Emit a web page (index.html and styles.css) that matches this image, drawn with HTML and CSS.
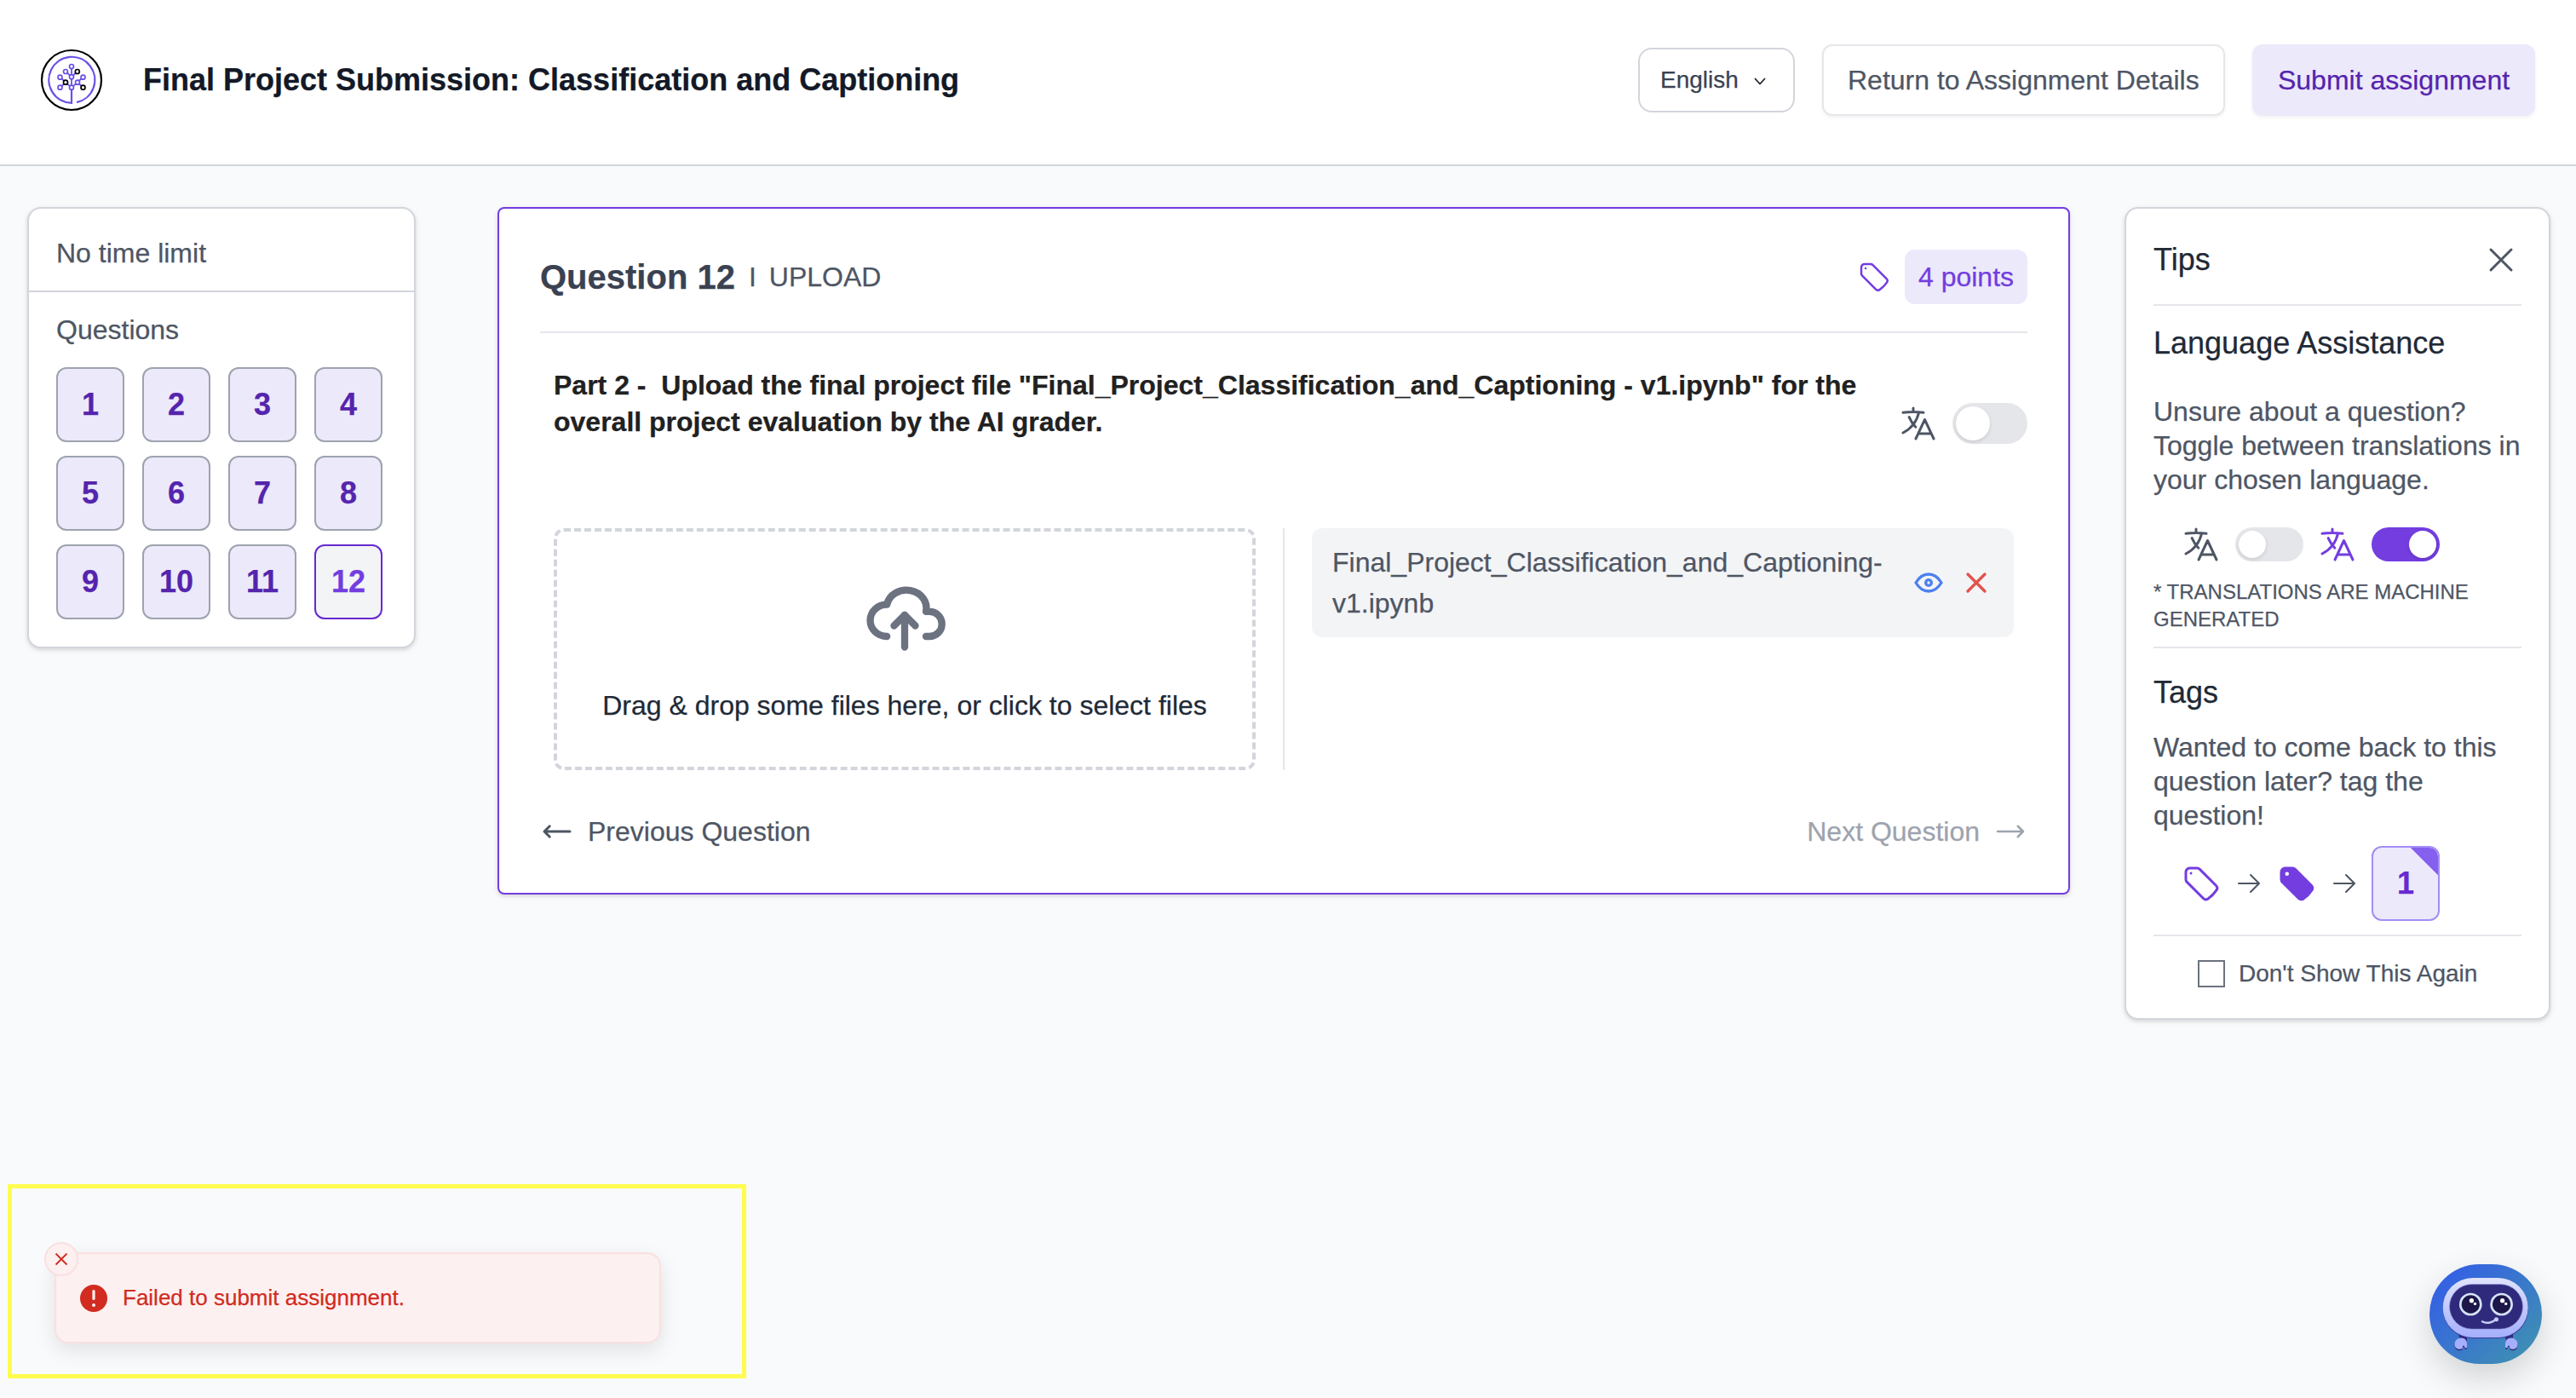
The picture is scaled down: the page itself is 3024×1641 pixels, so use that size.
FILE: index.html
```html
<!DOCTYPE html>
<html lang="en">
<head>
<meta charset="utf-8">
<title>Final Project Submission</title>
<link rel="stylesheet" href="styles.css">
</head>
<body>
<svg class="defs" width="0" height="0">
  <defs>
    <symbol id="tag" viewBox="0 0 24 24"><path d="M9.568 3H5.25A2.25 2.25 0 0 0 3 5.25v4.318c0 .597.237 1.17.659 1.591l9.581 9.581c.699.699 1.78.872 2.607.33a18.095 18.095 0 0 0 5.223-5.223c.542-.827.369-1.908-.33-2.607L11.16 3.66A2.25 2.25 0 0 0 9.568 3Z"/><path d="M6 6h.008v.008H6V6Z"/></symbol>
    <symbol id="language" viewBox="0 0 24 24"><path d="m10.5 21 5.25-11.25L21 21m-9-3h7.5M3 5.621a48.474 48.474 0 0 1 6-.371m0 0c1.12 0 2.233.038 3.334.114M9 5.25V3m3.334 2.364C11.176 10.658 7.69 15.08 3 17.502m9.334-12.138c.896.061 1.785.147 2.666.257m-4.589 8.495a18.023 18.023 0 0 1-3.827-5.802"/></symbol>
    <symbol id="arrow" viewBox="0 0 24 24"><path d="M13.5 4.5 21 12m0 0-7.5 7.5M21 12H3"/></symbol>
    <symbol id="x" viewBox="0 0 24 24"><path d="M6 18 18 6M6 6l12 12"/></symbol>
  </defs>
</svg>

<header class="topbar">
  <svg class="logo" viewBox="0 0 72 72" fill="none">
    <circle cx="36" cy="36" r="35" stroke="#000" stroke-width="2.2"/>
    <g stroke="#6a50e6" stroke-width="1.800">
      <path d="M36 47V62.8A27 27 0 1 1 42 62.2" stroke-width="2.2"/>
      <path d="M36 22.500v7M36 34.500v7.500M31 27.500l3 3M31 40.500l3.200 2.600M24.500 34.500l2.800 2.500M47.500 34.500l-3 2.500M41 40.500l-3.200 2.600M45 40.500l3 2.600M24.500 43l2.800-2.600M41 27.500l-3 3"/>
      <g stroke-width="1.700">
        <circle cx="36" cy="20" r="2.500"/><circle cx="29" cy="26" r="2.500"/><circle cx="36" cy="32.200" r="2.500"/><circle cx="22.500" cy="32.700" r="2.500"/><circle cx="49.500" cy="32.700" r="2.500"/><circle cx="43" cy="38.700" r="2.500"/><circle cx="22.500" cy="44.700" r="2.500"/><circle cx="36" cy="44.700" r="2.500"/>
        <g stroke="#000"><circle cx="42.800" cy="26" r="2.500"/><circle cx="29" cy="38.700" r="2.500"/><circle cx="49.500" cy="44.700" r="2.500"/></g>
      </g>
    </g>
  </svg>
  <h1 class="title">Final Project Submission: Classification and Captioning</h1>
  <div class="actions">
    <button class="btn btn-lang">English<svg class="chevron" viewBox="0 0 14 9" fill="none" stroke="currentColor" stroke-width="1.800"><path d="M1 1l6 6.500L13 1"/></svg></button>
    <button class="btn btn-plain">Return to Assignment Details</button>
    <button class="btn btn-submit">Submit assignment</button>
  </div>
</header>

<main class="layout">
  <nav class="card sidebar">
    <div class="limit">No time limit</div>
    <div class="questions">
      <div class="label">Questions</div>
      <div class="grid">
        <span class="num">1</span><span class="num">2</span><span class="num">3</span><span class="num">4</span>
        <span class="num">5</span><span class="num">6</span><span class="num">7</span><span class="num">8</span>
        <span class="num">9</span><span class="num">10</span><span class="num">11</span><span class="num current">12</span>
      </div>
    </div>
  </nav>

  <section class="card question">
    <div class="q-head">
      <h2>Question 12</h2><span class="bar">I</span><span class="kind">UPLOAD</span>
      <svg class="icon i40 purple q-tag"><use href="#tag"/></svg>
      <span class="points">4 points</span>
    </div>
    <div class="prompt-row">
      <p class="prompt">Part 2 -&nbsp; Upload the final project file "Final_Project_Classification_and_Captioning - v1.ipynb" for the overall project evaluation by the AI grader.</p>
      <div class="translate"><svg class="icon i48"><use href="#language"/></svg><span class="toggle big"><i></i></span></div>
    </div>
    <div class="upload">
      <div class="drop">
        <svg class="cloud" viewBox="0 0 24 24"><path d="M7 18a4.600 4.400 0 0 1 0 -9a5 4.500 0 0 1 11 2h1a3.500 3.500 0 0 1 0 7h-1"/><path d="M9 15l3 -3l3 3"/><path d="M12 12l0 9"/></svg>
        <span>Drag &amp; drop some files here, or click to select files</span>
      </div>
      <div class="files">
        <div class="file">
          <span class="name">Final_Project_Classification_and_Captioning-<br>v1.ipynb</span>
          <svg class="icon i40 thick blue" viewBox="0 0 24 24"><path d="M10 12a2 2 0 1 0 4 0a2 2 0 0 0 -4 0"/><path d="M21 12c-2.400 4 -5.400 6 -9 6c-3.600 0 -6.600 -2 -9 -6c2.400 -4 5.400 -6 9 -6c3.600 0 6.600 2 9 6"/></svg>
          <svg class="icon i40 thick red"><use href="#x"/></svg>
        </div>
      </div>
    </div>
    <div class="pager">
      <span class="prev"><svg class="icon i40 medium" viewBox="0 0 24 24"><path d="M6.750 15.750 3 12m0 0 3.750-3.750M3 12h18"/></svg>Previous Question</span>
      <span class="next">Next Question<svg class="icon i40" viewBox="0 0 24 24"><path d="M17.250 8.250 21 12m0 0-3.750 3.750M21 12H3"/></svg></span>
    </div>
  </section>

  <aside class="card tips">
    <div class="tips-head"><h3>Tips</h3><svg class="icon i48"><use href="#x"/></svg></div>
    <div class="tip">
      <h3>Language Assistance</h3>
      <p class="lang-text">Unsure about a question? Toggle between translations in your chosen language.</p>
      <div class="demo lang-demo">
        <svg class="icon i48"><use href="#language"/></svg><span class="toggle"><i></i></span>
        <svg class="icon i48 purple"><use href="#language"/></svg><span class="toggle on"><i></i></span>
      </div>
      <p class="note">* TRANSLATIONS ARE MACHINE GENERATED</p>
    </div>
    <div class="tip tags">
      <h3>Tags</h3>
      <p>Wanted to come back to this question later? tag the question!</p>
      <div class="demo">
        <svg class="icon i48 purple"><use href="#tag"/></svg>
        <svg class="icon i32"><use href="#arrow"/></svg>
        <svg class="i48 solid" viewBox="0 0 24 24"><path fill-rule="evenodd" d="M5.250 2.250a3 3 0 0 0-3 3v4.318a3 3 0 0 0 .879 2.121l9.580 9.581c.920.920 2.390 1.186 3.548.428a18.849 18.849 0 0 0 5.441-5.440c.758-1.160.492-2.629-.428-3.548l-9.580-9.581a3 3 0 0 0-2.122-.879H5.250ZM6.375 7.500a1.125 1.125 0 1 0 0-2.250 1.125 1.125 0 0 0 0 2.250Z"/></svg>
        <svg class="icon i32"><use href="#arrow"/></svg>
        <span class="num tagged">1</span>
      </div>
    </div>
    <label class="dismiss"><span class="box"></span>Don't Show This Again</label>
  </aside>
</main>

<div class="highlight"></div>
<div class="toast">
  <span class="toast-close"><svg viewBox="0 0 16 16"><path d="M1.500 1.500l13 13M14.500 1.500l-13 13"/></svg></span>
  <svg class="alert" viewBox="0 0 32 32"><circle cx="16" cy="16" r="16" fill="#d22b20"/><path d="M16 7.500v9" stroke="#fcf0f0" stroke-width="3.200" stroke-linecap="round"/><circle cx="16" cy="24" r="2" fill="#fcf0f0"/></svg>
  <span class="toast-text">Failed to submit assignment.</span>
</div>

<div class="bot">
  <svg viewBox="0 0 132 117" fill="none">
    <defs><linearGradient id="head" x1="0" y1="0" x2="0" y2="1"><stop offset="0" stop-color="#e0e3fc"/><stop offset="1" stop-color="#a5affb"/></linearGradient></defs>
    <path d="M34 82h10v8h-8zM88 82h10v8h-8z" fill="#302a7c"/>
    <path d="M29.500 94c0-5 4-7.500 8-7.500s6.500 3 6.500 7v4.500c-1 1.500-2.500 1-3-1-.5-1.500-2-1-2 .5 0 3-3 3-5.500 2.500-2.500-.5-4-3-4-6z" fill="#302a7c" transform="translate(0 1)"/>
    <path d="M29.500 94c0-5 4-7.500 8-7.500s6.500 3 6.500 7v4c-1 1.500-2.500 1-3-1-.5-1.500-2-1-2 .5 0 3-3 3-5.500 2.500-2.500-.5-4-2.500-4-5.500z" fill="#a5affb"/>
    <path d="M103.500 94c0-5-4-7.500-8-7.500s-6.500 3-6.500 7v4.500c1 1.500 2.500 1 3-1 .5-1.500 2-1 2 .5 0 3 3 3 5.500 2.500 2.500-.5 4-3 4-6z" fill="#302a7c" transform="translate(0 1)"/>
    <path d="M103.500 94c0-5-4-7.500-8-7.500s-6.500 3-6.500 7v4c1 1.500 2.500 1 3-1 .5-1.500 2-1 2 .5 0 3 3 3 5.500 2.500 2.500-.5 4-2.500 4-5.500z" fill="#a5affb"/>
    <rect x="15.700" y="17" width="100.300" height="70" rx="35" fill="#3b3a9a"/>
    <rect x="15.700" y="16" width="100" height="70" rx="35" fill="url(#head)"/>
    <rect x="23.500" y="23.600" width="86" height="52.400" rx="26.200" fill="#302a7c" stroke="#8b8fd8" stroke-width=".6"/>
    <g fill="#1c1748" stroke="#d5e2f8" stroke-width="2.700"><circle cx="48.300" cy="47" r="12"/><circle cx="84.600" cy="47" r="12"/></g>
    <g fill="#fff"><circle cx="49.400" cy="42.700" r="2.600"/><circle cx="53.500" cy="46.400" r="1.700"/><circle cx="85.600" cy="42.700" r="2.600"/><circle cx="89.700" cy="46.400" r="1.700"/></g>
    <path d="M62 67.200c5 3 12.500 1.500 16-3" stroke="#c3cdf8" stroke-width="2.400" stroke-linecap="round"/>
    <circle cx="78.500" cy="64.700" r="2.500" fill="#c3cdf8"/>
  </svg>
</div>
</body>
</html>
```
FILE: styles.css
```css
* { box-sizing: border-box; margin: 0; padding: 0; }

body {
  height: 1641px;
  position: relative;
  overflow: hidden;
  background: #f9fafc;
  color: #4e5664;
  font: 32px/48px "Liberation Sans", Arial, sans-serif;
  -webkit-text-stroke: .25px currentColor;
}

.defs { position: absolute; }

.icon { flex: none; fill: none; stroke: currentColor; stroke-width: 1.5; stroke-linecap: round; stroke-linejoin: round; }
.medium { stroke-width: 1.8; }
.thick { stroke-width: 2; }
.i32 { width: 32px; height: 32px; }
.i40 { width: 40px; height: 40px; }
.i48 { width: 48px; height: 48px; }
.purple { color: #733de0; }
.blue { color: #4d80f0; }
.red { color: #e0524b; }
.solid { fill: #733de0; }

/* Header */
.topbar {
  display: flex;
  align-items: center;
  height: 195px;
  padding: 0 48px 5px;
  background: #fff;
  border-bottom: 2px solid #d2d5db;
}
.logo { width: 72px; height: 72px; overflow: visible; }
.title { margin-left: 48px; font-size: 36px; color: #131927; white-space: nowrap; }
.actions { display: flex; align-items: center; gap: 32px; margin-left: auto; }
.btn {
  height: 84px;
  padding: 0 30px;
  border: 2px solid #e5e7eb;
  border-radius: 12px;
  background: #fff;
  color: #4e5664;
  font: inherit;
  white-space: nowrap;
  box-shadow: 0 2px 4px rgba(0, 0, 0, .06);
}
.btn-plain { width: 473px; padding: 0 32px 0 28px; }
.btn-submit { width: 332px; padding: 0; border-color: #ece9fb; background: #ece9fb; color: #5524ad; }
.btn-lang {
  display: flex;
  align-items: center;
  gap: 18px;
  width: 184px;
  height: 76px;
  padding: 0 24px;
  border-color: #d2d5db;
  border-radius: 16px;
  color: #3a4252;
  font-size: 28px;
  box-shadow: none;
}
.chevron { width: 14px; height: 9px; flex: none; color: #1f2430; margin-top: 3px; }

/* Page columns */
.layout { display: flex; align-items: flex-start; padding: 48px 30px 0 32px; }
.card {
  background: #fff;
  border: 2px solid #d2d5db;
  border-radius: 16px;
  box-shadow: 0 2px 6px rgba(0, 0, 0, .1), 0 2px 4px rgba(0, 0, 0, .06);
}

.sidebar { width: 456px; height: 518px; }
.limit { height: 98px; padding: 28px 32px 0; border-bottom: 2px solid #d2d5db; }
.questions { padding: 20px 32px 32px; }
.grid { display: grid; grid-template-columns: repeat(4, 85px); gap: 16px; margin-top: 20px; }
.num {
  display: flex;
  align-items: center;
  justify-content: center;
  width: 80px;
  height: 88px;
  border: 2px solid #9da3ae;
  border-radius: 12px;
  background: #ece9fb;
  color: #5524ad;
  font-size: 36px;
  font-weight: bold;
}
.current { border-color: #6729cf; background: #f3f4f6; color: #733de0; }

/* Question card */
.question { width: 1846px; height: 807px; margin-left: 96px; padding: 48px; border-color: #733de0; border-radius: 8px; }
.q-head { display: flex; align-items: center; height: 98px; padding-bottom: 32px; border-bottom: 2px solid #e5e7eb; }
.q-head h2 { font-size: 40px; color: #3a4252; }
.bar { margin: 0 15px 0 16px; }
.q-tag { margin-left: auto; }
.points { margin-left: 16px; width: 144px; height: 64px; border-radius: 12px; background: #ece9fb; color: #733de0; text-align: center; line-height: 64px; }
.prompt-row { display: flex; height: 229px; padding: 40px 0 0 16px; }
.prompt { flex: none; width: 1546px; line-height: 42.5px; font-weight: bold; color: #212121; }
.translate { display: flex; align-items: center; gap: 16px; height: 48px; margin: 42px 0 0 auto; }
.toggle { display: flex; width: 80px; height: 40px; padding: 4px; border-radius: 24px; background: #e5e6ea; }
.toggle i { width: 32px; height: 32px; border-radius: 50%; background: #fff; box-shadow: 0 2px 4px rgba(0, 0, 0, .12); }
.toggle.big { width: 88px; height: 48px; }
.toggle.big i { width: 40px; height: 40px; }
.toggle.on { background: #733de0; justify-content: flex-end; }

.upload { display: flex; height: 284px; padding: 0 16px; }
.drop {
  display: flex;
  flex-direction: column;
  align-items: center;
  gap: 32px;
  width: 824px;
  padding-top: 48px;
  border: 4px dashed #d2d5db;
  border-radius: 12px;
  color: #212936;
  white-space: nowrap;
}
.cloud { width: 100px; height: 100px; fill: none; stroke: #6c7280; stroke-width: 2; stroke-linecap: round; stroke-linejoin: round; }
.files { flex: 1; margin-left: 32px; padding-left: 32px; border-left: 2px solid #e5e7eb; }
.file { display: flex; align-items: center; gap: 16px; height: 128px; padding: 0 24px; border-radius: 12px; background: #f3f4f6; }
.name { flex: 1; white-space: nowrap; }

.pager { display: flex; justify-content: space-between; margin-top: 48px; }
.pager span { display: flex; align-items: center; gap: 16px; }
.pager .next { color: #9da3ae; }

/* Tips card */
.tips { width: 500px; height: 954px; margin-left: auto; padding: 0 32px; }
.tips h3 { font-size: 36px; font-weight: normal; color: #212936; }
.tips-head { display: flex; justify-content: space-between; align-items: center; height: 114px; padding: 36px 0 28px; border-bottom: 2px solid #e5e7eb; }
.tip { padding: 20px 0 16px; border-bottom: 2px solid #e5e7eb; }
.tip p { line-height: 40px; margin-top: 20px; }
.tip .lang-text { margin-top: 36px; }
.tip .note { margin-top: 16px; font-size: 24px; line-height: 32px; }
.tags { padding-top: 28px; }
.demo { display: flex; align-items: center; gap: 16px; margin-top: 16px; padding-left: 32px; }
.lang-demo { height: 48px; margin-top: 32px; }
.tagged {
  border-color: #a48df5;
  color: #6729cf;
  background: linear-gradient(45deg, #ece9fb calc(100% - 23px), #855fee calc(100% - 22.5px)) padding-box, #ece9fb;
}
.dismiss { display: flex; align-items: center; gap: 16px; margin: 20px 0 0 52px; font-size: 28px; white-space: nowrap; }
.box { width: 32px; height: 32px; border: 2px solid #6c7280; background: #fff; }

/* Layers over the page */
.highlight { position: absolute; left: 9px; top: 1390px; width: 867px; height: 228px; border: 5px solid #fffc4f; }
.toast {
  position: absolute;
  left: 64px;
  top: 1470px;
  display: flex;
  align-items: center;
  gap: 18px;
  width: 712px;
  height: 107px;
  padding-left: 28px;
  border: 2px solid #fae0e0;
  border-radius: 16px;
  background: #fcf0f0;
  color: #d22b20;
  font-size: 26px;
  box-shadow: 0 8px 24px rgba(0, 0, 0, .1);
}
.toast-text { padding-bottom: 2px; }
.alert { width: 32px; height: 32px; }
.toast-close {
  position: absolute;
  left: -14px;
  top: -14px;
  display: flex;
  align-items: center;
  justify-content: center;
  width: 40px;
  height: 40px;
  border: 2px solid #fae0e0;
  border-radius: 50%;
  background: #fcf0f0;
}
.toast-close svg { width: 16px; height: 16px; stroke: #d22b20; stroke-width: 1.8; }
.bot {
  position: absolute;
  left: 2852px;
  top: 1484px;
  width: 132px;
  height: 117px;
  border-radius: 58.5px;
  background: linear-gradient(135deg, #3562e2 15%, #3f92b0 95%);
  box-shadow: 0 16px 40px rgba(0, 0, 0, .16);
}
.bot svg { display: block; width: 132px; height: 117px; }
```
